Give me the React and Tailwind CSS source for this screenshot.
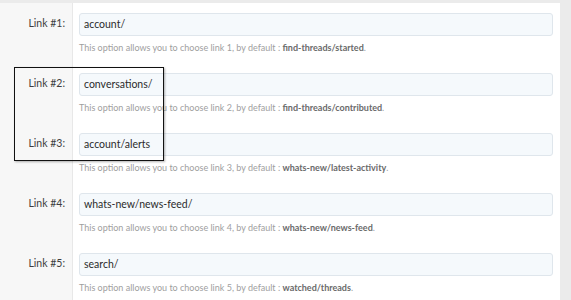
import React from "react";

const rows = [
  { n: 1, value: "account/", def: "find-threads/started" },
  { n: 2, value: "conversations/", def: "find-threads/contributed" },
  { n: 3, value: "account/alerts", def: "whats-new/latest-activity" },
  { n: 4, value: "whats-new/news-feed/", def: "whats-new/news-feed" },
  { n: 5, value: "search/", def: "watched/threads" },
];

export default function App() {
  return (
    <div
      className="relative w-[571px] h-[300px] overflow-hidden bg-[#ebebeb]"
      style={{ fontFamily: 'Lato, "Open Sans", sans-serif' }}
    >
      <div className="h-[3px] bg-[#ebebeb]" />
      <div className="flex w-[560px]">
        <div className="flex flex-col flex-1">
          {rows.map((r) => (
            <div key={r.n} className="flex h-[60px]">
              <div className="w-[73px] shrink-0 bg-[#f7f7f7] border-r border-[#e8e8e8] pt-[10px] pr-[7px]">
                <div className="h-[22px] flex items-center justify-end text-[10.5px] text-[#3e3e3e]">
                  Link #{r.n}:
                </div>
              </div>
              <div className="flex-1 bg-white pt-[10px] pl-[6px] pr-[7px]">
                <div className="h-[23px] rounded-[3px] border border-[#dfe6ec] bg-[#f5f9fc] flex items-center pl-[4px] text-[10.5px] text-[#2b2b2b]">
                  {r.value}
                </div>
                <div className="mt-[6px] leading-[12px] text-[9px] text-[#a0a0a0] whitespace-nowrap">
                  This option allows you to choose link {r.n}, by default :{" "}
                  <span className="font-bold text-[#6a6a6a]">{r.def}</span>.
                </div>
              </div>
            </div>
          ))}
        </div>
      </div>
      <div className="absolute left-[14px] top-[67px] w-[150px] h-[94px] border-[1.5px] border-[#111] shadow-[1px_1px_2px_rgba(0,0,0,0.3)]" />
    </div>
  );
}
